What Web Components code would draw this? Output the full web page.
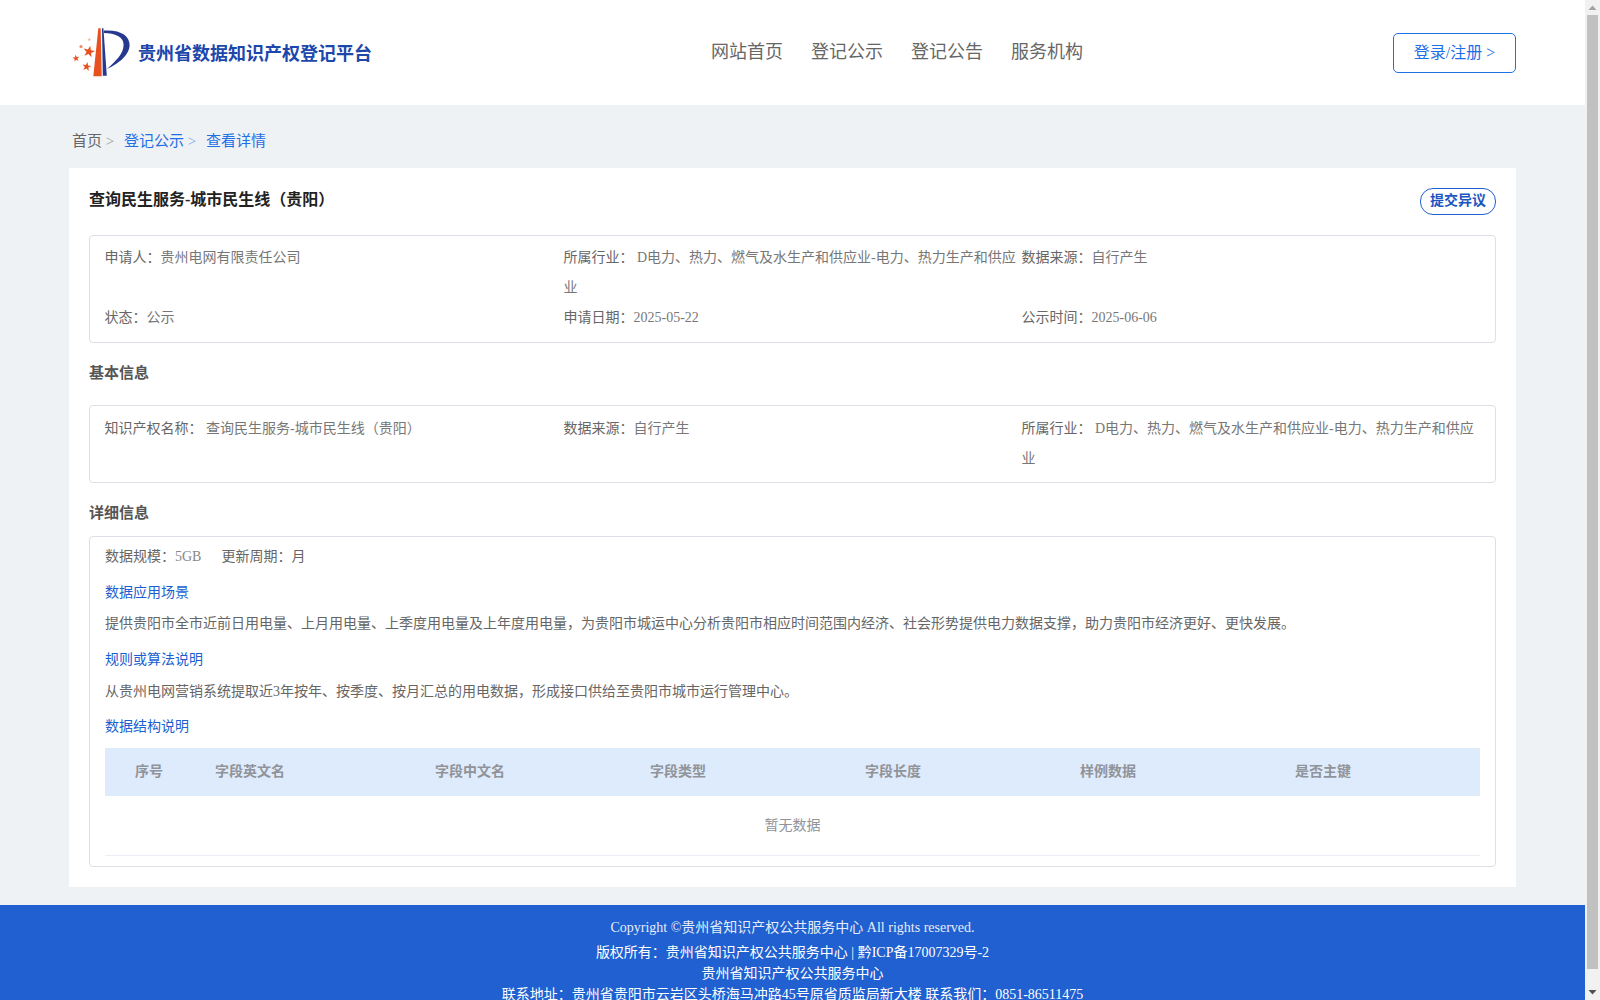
<!DOCTYPE html>
<html lang="zh-CN">

<head>
    <meta charset="UTF-8">
    <title>贵州省数据知识产权登记平台</title>
    <style>
        html, body {
            margin: 0;
            height: 1000px;
            overflow: hidden;
        }

        body {
            background: #eff2f5;
            font-family: "Liberation Serif", "Noto Sans CJK SC", serif;
            color: #666;
        }

        #page {
            width: 1585px;
        }

        #first-heading {
            margin-bottom: 9px;
        }
    </style>
</head>

<body>
    <div id="page">
        <site-header></site-header>
        <detail-main>
            <bread-crumb></bread-crumb>
            <detail-card title-text="查询民生服务-城市民生线（贵阳）">
                <info-box>
                    <info-item label="申请人：" value="贵州电网有限责任公司"></info-item>
                    <info-item label="所属行业： " value="D电力、热力、燃气及水生产和供应业-电力、热力生产和供应业"></info-item>
                    <info-item label="数据来源：" value="自行产生"></info-item>
                    <info-item label="状态：" value="公示"></info-item>
                    <info-item label="申请日期：" value="2025-05-22"></info-item>
                    <info-item label="公示时间：" value="2025-06-06"></info-item>
                </info-box>
                <section-heading id="first-heading">基本信息</section-heading>
                <info-box class="plain">
                    <info-item label="知识产权名称： " value="查询民生服务-城市民生线（贵阳）"></info-item>
                    <info-item label="数据来源：" value="自行产生"></info-item>
                    <info-item label="所属行业： " value="D电力、热力、燃气及水生产和供应业-电力、热力生产和供应业"></info-item>
                </info-box>
                <section-heading>详细信息</section-heading>
                <detail-box>
                    <field-table slot="table"></field-table>
                </detail-box>
            </detail-card>
        </detail-main>
        <site-footer></site-footer>
    </div>
    <page-scrollbar></page-scrollbar>

    <script>
        // small helper, every element below just sets its html in an open shadow root
        class BaseEl extends HTMLElement {
            constructor() {
                super();
                this.attachShadow({ mode: 'open' });
            }
            connectedCallback() {
                this.shadowRoot.innerHTML = this.render();
            }
        }

        class SiteHeader extends BaseEl {
            render() {
                return `
                <style>
                    :host {
                        display: grid;
                        grid-template-columns: 640px 1fr auto;
                        align-items: center;
                        height: 105px;
                        padding: 0 69px 0 71px;
                        background: #fff;
                    }
                    .brand { display: flex; align-items: center; gap: 7px; }
                    svg { display: block; }
                    .name { font-size: 18px; font-weight: 700; color: #1d47ab; line-height: 26px; margin-top: 2px; }
                    nav { display: flex; gap: 28px; font-size: 18px; line-height: 26px; color: #666; margin-bottom: 1px; }
                    .login {
                        box-sizing: border-box;
                        width: 123px;
                        height: 40px;
                        border: 1px solid #1f6fe5;
                        border-radius: 5px;
                        color: #1f6fe5;
                        font-size: 16px;
                        line-height: 38px;
                        text-align: center;
                    }
                </style>
                <div class="brand">
                    <svg width="60" height="52" viewBox="0 0 60 52">
                        <defs>
                            <polygon id="s" points="0,-10 2.35,-3.09 9.51,-3.09 3.8,1.18 5.88,8.09 0,3.8 -5.88,8.09 -3.8,1.18 -9.51,-3.09 -2.35,-3.09"/>
                        </defs>
                        <path d="M27.3 1.3 L29.7 1.3 L30.7 49.3 L22.3 49.3 Z" fill="#e8501f"/>
                        <path d="M31 1.3 L32.4 1.3 L35.8 48.7 L31.8 48.7 Z" fill="#27388f"/>
                        <path d="M33 3.6 C50 2.6 58.6 9 58.6 18 C58.6 28 47 37 36 42 C45 33.5 52.6 27 52.6 17.5 C52.6 9.5 44 6.4 33 6 Z" fill="#27388f"/>
                        <use href="#s" fill="#e8501f" transform="translate(18 24.7) rotate(12) scale(.62)"/>
                        <use href="#s" fill="#e8501f" transform="translate(5 31.3) rotate(-8) scale(.36)"/>
                        <use href="#s" fill="#e8501f" transform="translate(15.7 39.7) rotate(10) scale(.47)"/>
                        <circle cx="10" cy="19.5" r="1.6" fill="#ef8a60"/>
                        <circle cx="18.3" cy="12.7" r="1.1" fill="#f2a88a"/>
                    </svg>
                    <span class="name">贵州省数据知识产权登记平台</span>
                </div>
                <nav>
                    <span>网站首页</span><span>登记公示</span><span>登记公告</span><span>服务机构</span>
                </nav>
                <div class="login">登录/注册 &gt;</div>`;
            }
        }

        class DetailMain extends BaseEl {
            render() {
                return `
                <style>
                    :host { display: block; padding: 24px 69px 18px; }
                </style>
                <slot></slot>`;
            }
        }

        class BreadCrumb extends BaseEl {
            render() {
                return `
                <style>
                    :host {
                        display: block;
                        padding-left: 3px;
                        margin-bottom: 15px;
                        font-size: 15px;
                        line-height: 24px;
                        color: #666;
                    }
                    .link { color: #1f6fe5; margin-left: 6px; }
                    .sep { color: #999; }
                    .link .sep { color: #7ba6ea; }
                </style>
                首页<span class="sep"> &gt; </span><span class="link">登记公示<span class="sep"> &gt; </span></span><span class="link">查看详情</span>`;
            }
        }

        class DetailCard extends BaseEl {
            render() {
                return `
                <style>
                    :host { display: block; background: #fff; padding: 20px; }
                    .top { display: flex; justify-content: space-between; align-items: flex-start; margin-bottom: 20px; }
                    h2 { margin: 1px 0 0; font-size: 16px; line-height: 22px; color: #222; font-weight: 700; }
                    .objection {
                        box-sizing: border-box;
                        height: 27px;
                        padding: 0 9px;
                        border: 1px solid #1f5fcf;
                        border-radius: 13px;
                        color: #1a55c0;
                        font-size: 14px;
                        font-weight: 700;
                        line-height: 24px;
                    }
                </style>
                <div class="top">
                    <h2>${this.getAttribute('title-text')}</h2>
                    <div class="objection">提交异议</div>
                </div>
                <slot></slot>`;
            }
        }

        class InfoBox extends BaseEl {
            render() {
                return `
                <style>
                    :host {
                        display: grid;
                        grid-template-columns: 459px 458px 458.5px;
                        padding: 7px 14.5px 9px;
                        border: 1px solid #dcdfe6;
                        border-radius: 4px;
                    }
                    :host(.plain) { padding: 8px 14.5px 8px; }
                </style>
                <slot></slot>`;
            }
        }

        class InfoItem extends BaseEl {
            render() {
                return `
                <style>
                    :host { display: block; font-size: 14px; line-height: 30px; color: #666; }
                    span { color: #777; }
                </style>
                ${this.getAttribute('label')}<span>${this.getAttribute('value')}</span>`;
            }
        }

        class SectionHeading extends BaseEl {
            render() {
                return `
                <style>
                    :host {
                        display: block;
                        padding-top: 7px;
                        font-size: 15px;
                        font-weight: 700;
                        line-height: 46px;
                        color: #555;
                    }
                </style>
                <slot></slot>`;
            }
        }

        class DetailBox extends BaseEl {
            render() {
                return `
                <style>
                    :host {
                        display: block;
                        padding: 5px 15px 10px;
                        border: 1px solid #dcdfe6;
                        border-radius: 4px;
                        font-size: 14px;
                        color: #666;
                    }
                    .meta { line-height: 30px; }
                    .meta b { font-weight: 400; color: #888; margin-right: 20px; }
                    h4 { margin: 9px 0 4px; font-size: 14px; font-weight: 400; line-height: 24px; color: #1a5fd0; }
                    h4.next { margin: 9px 0 5px; }
                    h4.last { margin: 8px 0 9px; }
                    p { margin: 0; line-height: 30px; }
                    ::slotted(field-table) { display: block; }
                </style>
                <div class="meta">数据规模：<b>5GB</b>更新周期：月</div>
                <h4>数据应用场景</h4>
                <p>提供贵阳市全市近前日用电量、上月用电量、上季度用电量及上年度用电量，为贵阳市城运中心分析贵阳市相应时间范围内经济、社会形势提供电力数据支撑，助力贵阳市经济更好、更快发展。</p>
                <h4 class="next">规则或算法说明</h4>
                <p>从贵州电网营销系统提取近3年按年、按季度、按月汇总的用电数据，形成接口供给至贵阳市城市运行管理中心。</p>
                <h4 class="last">数据结构说明</h4>
                <slot name="table"></slot>`;
            }
        }

        class FieldTable extends BaseEl {
            render() {
                const cols = ['序号', '字段英文名', '字段中文名', '字段类型', '字段长度', '样例数据', '是否主键'];
                return `
                <style>
                    :host { display: block; font-size: 14px; color: #909399; }
                    .head {
                        display: grid;
                        grid-template-columns: 100px 220px 215px 215px 215px 215px 195px;
                        height: 48px;
                        background: #deebfc;
                        font-weight: 700;
                        line-height: 48px;
                    }
                    .head span { padding-left: 10px; }
                    .head span:first-child { padding-left: 30px; }
                    .empty {
                        height: 59px;
                        border-bottom: 1px solid #ebeef5;
                        line-height: 59px;
                        text-align: center;
                    }
                </style>
                <div class="head">${cols.map(c => `<span>${c}</span>`).join('')}</div>
                <div class="empty">暂无数据</div>`;
            }
        }

        class SiteFooter extends BaseEl {
            render() {
                return `
                <style>
                    :host {
                        display: block;
                        padding-top: 12px;
                        background: #2060d0;
                        color: #fff;
                        font-size: 14px;
                        line-height: 21px;
                        text-align: center;
                    }
                    .copy { line-height: 22px; margin-bottom: 3px; color: #e6edfa; }
                </style>
                <div class="copy">Copyright ©贵州省知识产权公共服务中心 All rights reserved.</div>
                <div>版权所有：贵州省知识产权公共服务中心 | 黔ICP备17007329号-2</div>
                <div>贵州省知识产权公共服务中心</div>
                <div>联系地址：贵州省贵阳市云岩区头桥海马冲路45号原省质监局新大楼 联系我们：0851-86511475</div>`;
            }
        }

        // the window scrollbar, drawn over the right edge
        class PageScrollbar extends BaseEl {
            render() {
                return `
                <style>
                    :host {
                        position: fixed;
                        top: 0;
                        right: 0;
                        width: 15px;
                        height: 1000px;
                        background: #f1f1f1;
                    }
                    .thumb { position: absolute; top: 15px; left: 2px; width: 11px; height: 954px; background: #c1c1c1; }
                    svg { position: absolute; left: 0; width: 15px; height: 15px; }
                </style>
                <svg style="top:0" viewBox="0 0 15 15"><path d="M3.5 10 H11.5 L7.5 5.5 Z" fill="#a3a3a3"/></svg>
                <div class="thumb"></div>
                <svg style="bottom:0" viewBox="0 0 15 15"><path d="M3.5 5 H11.5 L7.5 9.5 Z" fill="#505050"/></svg>`;
            }
        }

        customElements.define('site-header', SiteHeader);
        customElements.define('detail-main', DetailMain);
        customElements.define('bread-crumb', BreadCrumb);
        customElements.define('detail-card', DetailCard);
        customElements.define('info-box', InfoBox);
        customElements.define('info-item', InfoItem);
        customElements.define('section-heading', SectionHeading);
        customElements.define('detail-box', DetailBox);
        customElements.define('field-table', FieldTable);
        customElements.define('site-footer', SiteFooter);
        customElements.define('page-scrollbar', PageScrollbar);
    </script>
</body>

</html>
